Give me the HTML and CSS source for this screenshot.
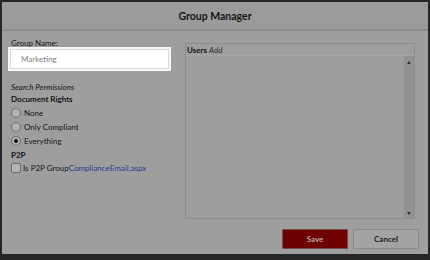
FILE: index.html
```html
<!DOCTYPE html>
<html lang="en">
<head>
  <meta charset="UTF-8" />
  <title>Group Manager</title>
  <link rel="stylesheet" href="styles.css">
</head>
<body>
  <div class="modal">
    <div class="modal-header">Group Manager</div>
    <div class="modal-body">
      <div class="left-col">
        <label class="field-label">Group Name:</label>
        <div class="name-input">Marketing</div>
        <p class="section-note">Search Permissions</p>
        <p class="group-title">Document Rights</p>
        <div class="option"><span class="radio"></span>None</div>
        <div class="option"><span class="radio"></span>Only Compliant</div>
        <div class="option"><span class="radio checked"></span>Everything</div>
        <p class="group-title p2p">P2P</p>
        <div class="option"><span class="checkbox"></span>Is P2P Group<a href="#" class="link">ComplianceEmail.aspx</a></div>
      </div>
      <div class="right-col">
        <div class="users-box">
          <div class="users-head"><b>Users</b> <i>Add</i></div>
          <div class="users-list">
            <div class="scrollbar">
              <span class="arrow up"></span>
              <span class="arrow down"></span>
            </div>
          </div>
        </div>
        <div class="actions">
          <button class="btn save">Save</button>
          <button class="btn cancel">Cancel</button>
        </div>
      </div>
    </div>
  </div>
</body>
</html>
```

FILE: styles.css
```css
body {
  margin: 0;
  padding: 2px 2px 0 2px;
  background-color: #262626;
  font-family: Lato, "Open Sans", sans-serif;
  color: #151515;
  height: 260px;
  box-sizing: border-box;
  overflow: hidden;
}

.modal {
  background: #9e9e9e;
  height: 252px;
  display: flex;
  flex-direction: column;
}

.modal-header {
  height: 27px;
  line-height: 28px;
  text-align: center;
  font-weight: bold;
  font-size: 10.5px;
  border-bottom: 2px solid #8c8c8c;
  background: #9b9b9b;
}

.modal-body {
  flex: 1;
  display: flex;
  padding: 8px 13px 0 6px;
}

.left-col {
  width: 163px;
  font-size: 8px;
}

.field-label {
  display: block;
  padding-left: 3px;
  height: 8px;
  line-height: 8px;
}

.name-input {
  background: #fff;
  border: 1px solid #dadada;
  box-shadow: 0 0 0 2px #f7f7f7;
  margin: 2px 2px 0;
  height: 18px;
  line-height: 18px;
  padding-left: 10px;
  color: #7f7f7f;
  font-size: 8px;
}

.section-note {
  font-style: italic;
  height: 10px;
  line-height: 10px;
  margin: 13px 0 0 3px;
}

.group-title {
  font-weight: bold;
  height: 10px;
  line-height: 10px;
  margin: 2px 0 2px 3px;
}

.group-title.p2p {
  margin-top: 2px;
  margin-bottom: 1px;
}

.option {
  display: flex;
  align-items: center;
  height: 14px;
  padding-left: 3px;
}

.radio {
  width: 8px;
  height: 8px;
  border-radius: 50%;
  border: 1px solid #6e6e6e;
  background: #b4b4b4;
  margin-right: 3px;
  position: relative;
}

.radio.checked::after {
  content: "";
  position: absolute;
  left: 2px;
  top: 2px;
  width: 4px;
  height: 4px;
  border-radius: 50%;
  background: #111;
}

.checkbox {
  width: 8px;
  height: 8px;
  border: 1px solid #6e6e6e;
  border-radius: 2px;
  background: #b4b4b4;
  margin-right: 2px;
}

.link {
  color: #1f3f8f;
  text-decoration: none;
}

.right-col {
  flex: 1;
  margin-left: 14px;
  display: flex;
  flex-direction: column;
}

.users-box {
  height: 176px;
  margin-top: 4px;
  box-sizing: border-box;
  border: 1px solid #8c8c8c;
  display: flex;
  flex-direction: column;
}

.users-head {
  font-size: 8px;
  height: 11px;
  line-height: 12px;
  padding-left: 1px;
  border-bottom: 1px solid #a6a6a6;
}

.users-head i {
  color: #333;
}

.users-list {
  flex: 1;
  display: flex;
  justify-content: flex-end;
}

.scrollbar {
  width: 10px;
  background: #929292;
  display: flex;
  flex-direction: column;
  justify-content: space-between;
  align-items: center;
  padding: 5px 0 3px;
}

.arrow {
  width: 0;
  height: 0;
  border-left: 2px solid transparent;
  border-right: 2px solid transparent;
}

.arrow.up {
  border-bottom: 3px solid #333;
}

.arrow.down {
  border-top: 3px solid #333;
}

.actions {
  display: flex;
  justify-content: flex-end;
  gap: 5px;
  margin-top: 10px;
  margin-right: -4px;
}

.btn {
  width: 66px;
  height: 20px;
  font-family: Lato, "Open Sans", sans-serif;
  font-size: 8px;
  font-weight: bold;
  border-radius: 1px;
}

.save {
  background: #6e0000;
  border: 1px solid #7a4a4a;
  color: #b9a6a6;
}

.cancel {
  background: #a3a3a3;
  border: 1px solid #8a8a8a;
  color: #222;
}
```
